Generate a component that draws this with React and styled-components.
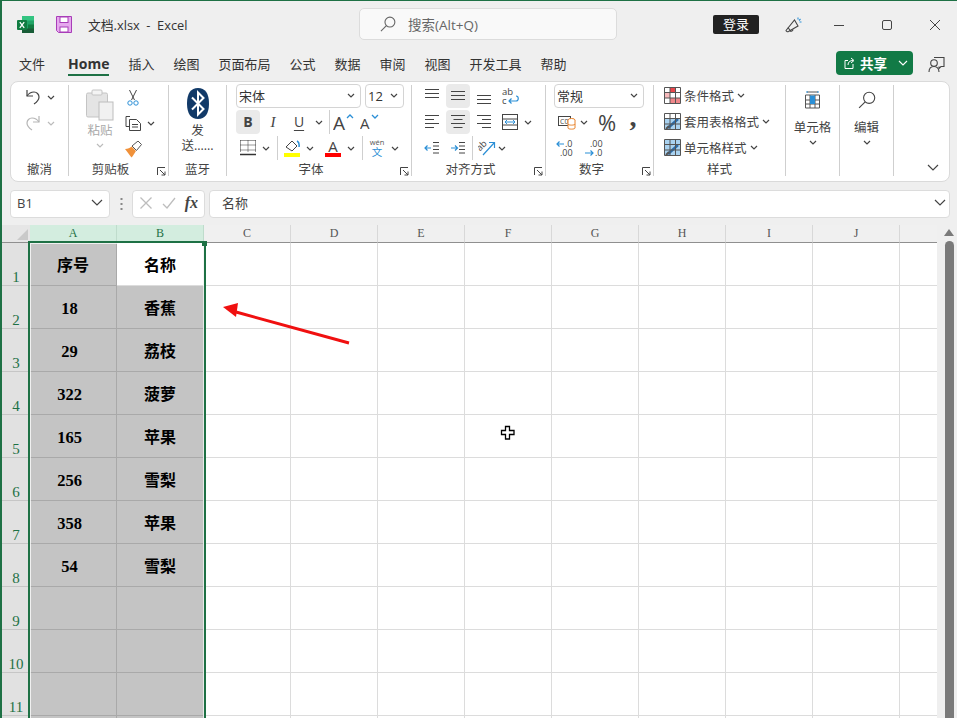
import React from "react";
import styled, { createGlobalStyle } from "styled-components";

const UI_FONT = `"Open Sans", "Noto Sans CJK SC", sans-serif`;
const GREEN = "#1e7145";
const INK = "#444";
const BLUE = "#2b8fd6";

const COLUMNS = ["A", "B", "C", "D", "E", "F", "G", "H", "I", "J", "K"];
const TABLE = [
  ["序号", "名称"],
  ["18", "香蕉"],
  ["29", "荔枝"],
  ["322", "菠萝"],
  ["165", "苹果"],
  ["256", "雪梨"],
  ["358", "苹果"],
  ["54", "雪梨"],
  ["", ""],
  ["", ""],
  ["", ""],
  ["", ""],
];
const TABS = ["文件", "Home", "插入", "绘图", "页面布局", "公式", "数据", "审阅", "视图", "开发工具", "帮助"];

const Global = createGlobalStyle`
  html, body { margin: 0; padding: 0; background: #efefef; }
  #root { width: 957px; height: 718px; overflow: hidden; }
  * { box-sizing: border-box; }
`;

const Frame = styled.div`
  width: 957px;
  height: 718px;
  overflow: hidden;
  background: #efefef;
  border-top: 1px solid ${GREEN};
  border-left: 2px solid ${GREEN};
  font-family: ${UI_FONT};
  color: #333;
  display: flex;
  flex-direction: column;
`;

const TitleBar = styled.div`
  height: 47px;
  flex: none;
  display: flex;
  align-items: center;
  & > * {
    flex: none;
  }
`;

const TitleLeft = styled.div`
  width: 357px;
  padding-left: 15px;
  display: flex;
  align-items: center;
`;

const SaveSlot = styled.span`
  display: flex;
  margin: 0 16px 0 22px;
`;

const DocName = styled.span`
  font-size: 12.8px;
  white-space: pre;
  color: #333;
`;

const SearchBox = styled.div`
  width: 258px;
  height: 32px;
  margin-top: -1px;
  padding-left: 20px;
  background: #f9f9f9;
  border: 1px solid #dcdcdc;
  border-radius: 5px;
  display: flex;
  align-items: center;
  gap: 12px;
  font-size: 13.5px;
  color: #666;
`;

const LoginButton = styled.button`
  width: 46px;
  height: 19px;
  margin: -1px 26px 0 96px;
  padding: 0;
  border: 0;
  border-radius: 2px;
  background: #222;
  color: #fff;
  font: 13px/19px ${UI_FONT};
`;

const WinButton = styled.span`
  width: 48px;
  flex: none;
  display: flex;
  justify-content: center;
  margin-left: ${(p) => p.$ml || 0}px;
`;

const TabBar = styled.div`
  height: 33px;
  flex: none;
  padding-left: 17px;
  display: flex;
  align-items: flex-start;
`;

const Tab = styled.span`
  height: 28px;
  margin-left: ${(p) => (p.$active ? 4 : 0)}px;
  margin-right: 19px;
  padding-top: 7px;
  font-size: ${(p) => (p.$active ? "14px" : "13px")};
  line-height: 18px;
  font-weight: ${(p) => (p.$active ? 700 : 400)};
  border-bottom: 2px solid ${(p) => (p.$active ? GREEN : "transparent")};
  color: #333;
`;

const ShareButton = styled.div`
  width: 77px;
  height: 24px;
  flex: none;
  margin: 3px 0 0 auto;
  padding-left: 8px;
  border-radius: 4px;
  background: #127a46;
  color: #fff;
  font-size: 13.5px;
  font-weight: 700;
  display: flex;
  align-items: center;
  gap: 4px;
`;

const ShareChevron = styled.span`
  display: flex;
  margin-left: 7px;
`;

const CommentSlot = styled.span`
  display: flex;
  margin: 8px 12px 0 15px;
`;

const Ribbon = styled.div`
  height: 101px;
  flex: none;
  margin: 0 7px 0 8px;
  padding: 3px 0 5px;
  background: #fff;
  border: 1px solid #dadada;
  border-radius: 8px;
  display: flex;
`;

const Group = styled.section`
  position: relative;
  flex: ${(p) => (p.$w ? `0 0 ${p.$w}px` : "1")};
  padding-left: ${(p) => p.$pad || 0}px;
  border-right: ${(p) => (p.$w ? "1px solid #cfcfcf" : "0")};
  display: flex;
  flex-direction: column;
`;

const GroupBody = styled.div`
  flex: 1;
  margin-top: -1px;
  min-height: 0;
`;

const GroupLabel = styled.div`
  margin-left: ${(p) => -(p.$pad || 0)}px;
  padding-right: ${(p) => (p.$launch ? 16 : 0)}px;
  font-size: 12.5px;
  line-height: 13px;
  text-align: center;
  color: #444;
`;

const Launcher = styled.span`
  position: absolute;
  right: 2px;
  bottom: 0;
  display: flex;
`;

const Row = styled.div`
  height: ${(p) => p.$h || 24}px;
  margin-bottom: ${(p) => (p.$h ? 0 : 2)}px;
  display: flex;
  align-items: center;
`;

const Btn = styled.span`
  width: ${(p) => p.$w || 24}px;
  height: 24px;
  flex: none;
  margin-left: ${(p) => p.$ml || 0}px;
  border-radius: 4px;
  background: ${(p) => (p.$active ? "#eaeaea" : "transparent")};
  color: ${INK};
  display: flex;
  align-items: center;
  justify-content: center;
`;

const ChevLine = styled.span`
  height: 14px;
  display: flex;
  align-items: center;
`;

const Letter = styled.span`
  font-family: ${(p) => (p.$serif ? `"Liberation Serif", serif` : `"Open Sans", sans-serif`)};
  font-size: ${(p) => p.$size || 14}px;
  font-weight: ${(p) => (p.$bold ? 700 : 400)};
  font-style: ${(p) => (p.$italic ? "italic" : "normal")};
  text-decoration: ${(p) => (p.$under ? "underline" : "none")};
  text-underline-offset: 3px;
  line-height: 1;
  margin-bottom: ${(p) => p.$lift || 0}px;
  color: ${INK};
`;

const Sep = styled.span`
  width: 1px;
  height: 24px;
  flex: none;
  margin: 0 ${(p) => p.$right || 2}px 0 ${(p) => p.$left || 3}px;
  background: #cfcfcf;
`;

const Select = styled.div`
  width: ${(p) => p.$w}px;
  height: 24px;
  flex: none;
  margin-left: ${(p) => p.$ml || 0}px;
  padding: 0 5px 1px 2px;
  border: 1px solid #d4d4d4;
  border-radius: 4px;
  display: flex;
  align-items: center;
  justify-content: space-between;
  font-size: 13px;
  color: #333;
`;

const SplitRow = styled.div`
  display: flex;
`;

const PasteColumn = styled.div`
  width: 40px;
  padding-top: 5px;
  margin-right: 2px;
  display: flex;
  flex-direction: column;
  align-items: center;
`;

const StackText = styled.span`
  font-size: 12.5px;
  line-height: 15px;
  color: ${(p) => (p.$muted ? "#aaa" : "#444")};
  margin-top: ${(p) => p.$mt || 0}px;
  white-space: nowrap;
`;

const StackColumn = styled.div`
  padding-top: ${(p) => p.$top || 5}px;
  display: flex;
  flex-direction: column;
  align-items: center;
`;

const StyleStack = styled.div`
  margin-top: -2px;
`;

const StyleItem = styled.div`
  height: 26px;
  display: flex;
  align-items: center;
  gap: 3px;
  font-size: 12.5px;
  color: #444;
`;

const CollapseSlot = styled.span`
  margin: auto 10px 0 auto;
  padding-bottom: 5px;
  display: flex;
`;

const FormulaRow = styled.div`
  height: 28px;
  flex: none;
  margin: 8px 7px 7px 8px;
  display: flex;
  align-items: stretch;
`;

const FieldBox = styled.div`
  width: ${(p) => (p.$w ? `${p.$w}px` : "auto")};
  flex: ${(p) => (p.$w ? "none" : "1")};
  margin-left: ${(p) => p.$ml || 0}px;
  padding: 0 ${(p) => p.$padR || 6}px 3px ${(p) => p.$padL || 6}px;
  background: #fff;
  border: 1px solid #dcdcdc;
  border-radius: 4px;
  display: flex;
  align-items: center;
  justify-content: space-between;
  font-size: 13px;
  color: #444;
`;

const DotsSlot = styled.span`
  width: 22px;
  flex: none;
  display: flex;
  align-items: center;
  justify-content: center;
`;

const SheetArea = styled.div`
  flex: 1;
  min-height: 0;
  display: flex;
`;

const Sheet = styled.div`
  position: relative;
  width: 935px;
  flex: none;
  overflow: hidden;
  background: #fff;
  display: grid;
  grid-template-columns: 28px repeat(11, 87px);
  grid-auto-rows: 43px;
  grid-template-rows: 18px;
`;

const Corner = styled.div`
  background: #e6e6e6;
  border-bottom: 1px solid #8f8f8f;
  display: flex;
  align-items: flex-end;
  justify-content: flex-end;
  padding: 0 2px 2px 0;
`;

const ColHead = styled.div`
  background: ${(p) => (p.$on ? "#d3eddf" : "#f0f0f0")};
  color: ${(p) => (p.$on ? GREEN : "#555")};
  border-right: 1px solid ${(p) => (p.$on ? "#bfdccc" : "#d8d8d8")};
  border-bottom: 1px solid #8f8f8f;
  font: 12px/17px "Liberation Serif", serif;
  text-align: center;
`;

const RowHead = styled.div`
  background: #e1e1e1;
  border-bottom: 1px solid #c6c6c6;
  color: ${GREEN};
  font: 15px/15px "Liberation Serif", serif;
  display: flex;
  align-items: flex-end;
  justify-content: center;
`;

const Cell = styled.div`
  background: ${(p) => (p.$fill ? "#c4c4c4" : "#fff")};
  border-right: 1px solid ${(p) => (p.$fill ? "#a9a9a9" : "#dcdcdc")};
  border-bottom: 1px solid ${(p) => (p.$fill ? "#a9a9a9" : "#dcdcdc")};
  padding: ${(p) => (p.$num ? 3 : 0)}px ${(p) => (p.$num ? 7 : 0)}px 0 0;
  font-family: "Liberation Serif", "Noto Sans CJK SC", serif;
  font-size: ${(p) => (p.$num ? 16.5 : 16)}px;
  font-weight: 700;
  color: #000;
  display: flex;
  align-items: center;
  justify-content: center;
`;

const Selection = styled.div`
  position: absolute;
  left: 26px;
  top: 16px;
  width: 178px;
  height: 600px;
  border: 2px solid ${GREEN};
  box-shadow: inset 0 0 0 1px rgba(255, 255, 255, 0.75);
  pointer-events: none;
`;

const Handle = styled.span`
  position: absolute;
  right: -3px;
  top: -2px;
  width: 5px;
  height: 5px;
  background: ${GREEN};
`;

const Overlay = styled.svg`
  position: absolute;
  left: ${(p) => p.$x}px;
  top: ${(p) => p.$y}px;
  pointer-events: none;
`;

const ScrollBar = styled.div`
  flex: 1;
  padding: 4px 4px 0 7px;
  display: flex;
  flex-direction: column;
  align-items: center;
`;

const ScrollThumb = styled.div`
  width: 9px;
  flex: 1;
  margin-top: 5px;
  background: #7a7a7a;
  border-radius: 5px 5px 0 0;
`;

const Glyph = ({ w = 16, h = 16, children, stroke = INK, sw = 1 }) => (
  <svg width={w} height={h} viewBox={`0 0 ${w} ${h}`} fill="none" stroke={stroke} strokeWidth={sw} style={{ display: "block" }}>
    {children}
  </svg>
);

const Chevron = ({ color = INK, muted }) => (
  <Glyph w={8} h={5} stroke={muted ? "#bbb" : color} sw={1.2}>
    <path d="M1 1l3 3 3-3" />
  </Glyph>
);

const Chev = ({ ml, muted }) => (
  <Btn $w={14} $ml={ml}>
    <Chevron muted={muted} />
  </Btn>
);

const LauncherIcon = () => (
  <Launcher>
    <Glyph w={9} h={9} sw={1}>
      <path d="M.5 8V.5H8M3 3l5 5M8 4.5V8H4.5" />
    </Glyph>
  </Launcher>
);

const ExcelLogo = () => (
  <svg width={17} height={17} viewBox="0 0 17 17" style={{ display: "block" }}>
    <rect x="5" y="0" width="12" height="17" rx="1.5" fill="#21a366" />
    <rect x="5" y="0" width="12" height="4.5" fill="#33c481" />
    <rect x="11" y="8.5" width="6" height="4.5" fill="#107c41" />
    <rect x="5" y="12.5" width="12" height="4.5" fill="#185c37" />
    <rect x="0" y="4" width="10" height="10" rx="1" fill="#107c41" />
    <path d="M2.8 6.2l4.4 5.6M7.2 6.2l-4.4 5.6" stroke="#fff" strokeWidth="1.3" />
  </svg>
);

const SaveIcon = () => (
  <svg width={16} height={17} viewBox="0 0 16 17" style={{ display: "block" }}>
    <path d="M.5.5h15v16H2.5l-2-2z" fill="#e6a8ee" stroke="#a83db8" />
    <rect x="4" y="1" width="8" height="5.5" fill="#fff" stroke="#a83db8" />
    <rect x="4" y="11" width="8" height="5" fill="#fff" stroke="#a83db8" />
  </svg>
);

const SearchIcon = ({ size = 16, color = "#666" }) => (
  <Glyph w={size} h={size} stroke={color} sw={1.1}>
    <circle cx={size * 0.62} cy={size * 0.38} r={size * 0.31} />
    <path d={`M${size * 0.4} ${size * 0.6}L${size * 0.06} ${size * 0.94}`} />
  </Glyph>
);

const Megaphone = () => (
  <Glyph w={17} h={17} sw={1.1}>
    <path d="M1 14.5L9.5 4l3.5 6-9.5 5.5c-1 .5-2.5-.2-2.5-1z" />
    <path d="M3 11.5l2.5 3.5" />
    <path d="M5 15a2 2 0 0 0 3-1.5" />
    <path d="M13 1.5v2M15.5 3l-1.5 1.5M16.5 6h-2" stroke={BLUE} />
  </Glyph>
);

const ShareIcon = () => (
  <Glyph w={12} h={12} stroke="#fff">
    <path d="M9 7v4.5H1v-8h3" />
    <path d="M4 8c0-3 2-4.5 5-4.5M7 1l3 2.5L7 6" />
  </Glyph>
);

const CommentIcon = () => (
  <Glyph w={17} h={17} sw={1.1}>
    <path d="M6 1.500h10v9h-3l-2 2v-2" />
    <circle cx="6" cy="7" r="3.300" fill="#efefef" />
    <path d="M1 16c0-3.500 2.200-5.500 5-5.500s5 2 5 5.500" />
  </Glyph>
);

const Undo = ({ color = INK, flip }) => (
  <Glyph w={18} h={18} stroke={color} sw={1.2}>
    <g transform={flip ? "matrix(-1 0 0 1 18 0)" : undefined}>
      <path d="M3 2v6h6" />
      <path d="M3 8c2-3 4-4 7-4a5 5 0 0 1 5 5c0 3-2 5-5 7" />
    </g>
  </Glyph>
);

const PasteIcon = () => (
  <svg width={28} height={32} viewBox="0 0 28 32" style={{ display: "block" }}>
    <rect x=".5" y="4" width="21" height="24" rx="1.5" fill="#e4e4e4" stroke="#c4c4c4" />
    <rect x="6" y="1" width="10" height="5" rx="1" fill="#f4f4f4" stroke="#c4c4c4" />
    <rect x="13" y="13" width="14" height="18" fill="#f1f1f1" stroke="#bdbdbd" />
  </svg>
);

const Scissors = () => (
  <Glyph w={12} h={17} sw={1}>
    <path d="M2.500 1l5 10M9.500 1l-5 10" />
    <circle cx="3" cy="14" r="2.200" stroke={BLUE} />
    <circle cx="9" cy="14" r="2.200" stroke={BLUE} />
  </Glyph>
);

const CopyIcon = () => (
  <Glyph w={17} h={16}>
    <path d="M5 1.500H1v10h3" />
    <path d="M4.500 4.500h7l4 4v7h-11z" fill="#fff" />
    <path d="M7 9.500h6M7 12h6" />
  </Glyph>
);

const BrushIcon = () => (
  <svg width={17} height={17} viewBox="0 0 17 17" style={{ display: "block" }}>
    <path d="M0 8c3 0 5-1 6.500-2.500L11 10c-1.500 2-3 5-4.500 6.500C4.500 14 2 10.500 0 8z" fill="#f0913a" />
    <path d="M7 5l6-5 3.500 3.500-5 6z" fill="#fff" stroke="#555" />
  </svg>
);

const BluetoothIcon = () => (
  <svg width={22} height={31} viewBox="0 0 22 31" style={{ display: "block" }}>
    <path d="M11 0c7 0 11 5 11 15.500S18 31 11 31 0 26 0 15.500 4 0 11 0z" fill="#123a68" />
    <path d="M5 9.500l11.500 11.500L11 26.500V4.500l5.500 5.500L5 21.500" fill="none" stroke="#fff" strokeWidth="2" />
  </svg>
);

const BorderIcon = () => (
  <Glyph w={16} h={16} stroke="#333">
    <path d="M.5 .5h15M.5 5h15M.5 10h15M.5 .5v11M8 .5v11M15.500 .5v11" strokeDasharray="1 1" />
    <path d="M0 14.500h16" strokeWidth={1.5} />
  </Glyph>
);

const FillIcon = () => (
  <svg width={16} height={18} viewBox="0 0 16 18" style={{ display: "block" }}>
    <path d="M2 8l6-6 5 5-5 5z" fill="#fff" stroke="#444" />
    <path d="M13 2c2 1 2.500 3 2 6" fill="none" stroke={BLUE} strokeWidth="1.500" />
    <rect x="0" y="14" width="16" height="4" fill="#ffff00" />
  </svg>
);

const TextColorIcon = () => (
  <svg width={16} height={18} viewBox="0 0 16 18" style={{ display: "block" }}>
    <text x="8" y="12.500" textAnchor="middle" fontSize="15" fontFamily="Open Sans" fill="#444">A</text>
    <rect x="0" y="14" width="16" height="4" fill="#ff0000" />
  </svg>
);

const GrowFont = ({ up }) => (
  <svg width={22} height={20} viewBox="0 0 22 20" style={{ display: "block" }}>
    <text x="0" y={up ? 18 : 17} fontSize={up ? 19 : 15} fontFamily="Open Sans" fill="#444">A</text>
    <path d={up ? "M14 6l3-3 3 3" : "M12 3l3 3 3-3"} fill="none" stroke={BLUE} strokeWidth="1.300" />
  </svg>
);

const WenIcon = () => (
  <svg width={16} height={20} viewBox="0 0 16 20" style={{ display: "block" }}>
    <text x="8" y="7" textAnchor="middle" fontSize="7.500" fontFamily="Open Sans" fill="#555">wén</text>
    <text x="8" y="18" textAnchor="middle" fontSize="10.500" fontFamily="Noto Sans CJK SC" fill={BLUE}>文</text>
  </svg>
);

const Lines = ({ widths, top = 3, gap = 4, align = "left", stroke = INK }) => (
  <Glyph w={16} h={16} stroke={stroke}>
    {widths.map((w, i) => {
      const x = align === "left" ? 1 : align === "center" ? 8 - w / 2 : 15 - w;
      const y = top + i * gap + 0.5;
      return <path key={i} d={`M${x} ${y}h${w}`} />;
    })}
  </Glyph>
);

const WrapIcon = () => (
  <svg width={18} height={18} viewBox="0 0 18 18" style={{ display: "block" }}>
    <text x="1" y="8" fontSize="9.500" fontFamily="Open Sans" fill="#444">ab</text>
    <text x="1" y="17" fontSize="9.500" fontFamily="Open Sans" fill="#444">c</text>
    <path d="M15 9c3 0 3 5 0 5H8M10.500 11.500L8 14l2.500 2.500" fill="none" stroke={BLUE} strokeWidth="1.200" />
  </svg>
);

const MergeIcon = () => (
  <Glyph w={16} h={16}>
    <rect x=".5" y=".5" width="15" height="15" />
    <path d="M.5 5h15M.5 11h15" />
    <path d="M3 8h10M5 6l-2 2 2 2M11 6l2 2-2 2" stroke={BLUE} />
  </Glyph>
);

const IndentIcon = ({ more }) => (
  <Glyph w={16} h={14}>
    <path d="M9 1.500h6M9 5h6M9 8.500h6M9 12h6" />
    <path d={more ? "M1 7h6M5 4.500L7.500 7 5 9.500" : "M7 7H1M3.500 4.500L1 7l2.500 2.500"} stroke={BLUE} strokeWidth={1.2} />
  </Glyph>
);

const OrientIcon = () => (
  <svg width={18} height={18} viewBox="0 0 18 18" style={{ display: "block" }}>
    <text x="0" y="10" fontSize="9" fontFamily="Open Sans" fill="#444" transform="rotate(-45 4 9)">ab</text>
    <path d="M5 16L16 4M11 3.500h5.500V9" fill="none" stroke={BLUE} strokeWidth="1.200" />
  </svg>
);

const AccountingIcon = () => (
  <svg width={18} height={16} viewBox="0 0 18 16" style={{ display: "block" }}>
    <rect x=".5" y="2.500" width="12" height="9" fill="none" stroke="#444" />
    <text x="2" y="10" fontSize="7" fontFamily="Open Sans" fill="#444">C0</text>
    <ellipse cx="13.500" cy="6" rx="3.500" ry="1.500" fill="#fff" stroke="#e8822a" />
    <path d="M10 6v8c0 1.500 7 1.500 7 0V6M10 10c0 1.500 7 1.500 7 0" fill="#fff" stroke="#e8822a" />
  </svg>
);

const DecimalIcon = ({ more }) => (
  <svg width={22} height={18} viewBox="0 0 22 18" style={{ display: "block" }}>
    <text x={more ? 9 : 7} y="8" fontSize="9" fontFamily="Open Sans" fill="#444">{more ? ".0" : ".00"}</text>
    <text x={more ? 4 : 12} y="17" fontSize="9" fontFamily="Open Sans" fill="#444">{more ? ".00" : ".0"}</text>
    <path d={more ? "M8 5H1M3.500 2.500L1 5l2.500 2.500" : "M2 14h8M7.500 11.500L10 14l-2.500 2.500"} fill="none" stroke={BLUE} strokeWidth="1.200" />
  </svg>
);

const TableBase = ({ children }) => (
  <svg width={17} height={17} viewBox="0 0 17 17" style={{ display: "block" }}>
    {children}
    <path d="M.5 .5h16v16H.5zM.5 5.500h16M.5 11h16M6 .5v16M11.500 .5v16" fill="none" stroke="#555" />
  </svg>
);

const CondIcon = () => (
  <TableBase>
    <rect x="6" y="1" width="5.500" height="4.500" fill="#e8474c" />
    <rect x="6" y="11" width="10" height="5" fill="#f0878a" />
    <rect x="1" y="5.500" width="5" height="5.500" fill="#f6b9bb" />
  </TableBase>
);

const Brushed = ({ solid }) => (
  <TableBase>
    <rect x="1" y={solid ? 1 : 6} width="15" height={solid ? 15 : 10} fill="#a9d2f0" />
    <path d="M4 15L14 6" stroke="#2d6ca8" strokeWidth="2.500" />
    <path d="M2 16l3-3" stroke="#555" strokeWidth="2" />
  </TableBase>
);

const CellsIcon = () => (
  <svg width={17} height={18} viewBox="0 0 17 18" style={{ display: "block" }}>
    <path d="M3 1h11M1.500 4h14v13h-14zM1.500 9h14M1.500 13h14M6 4v13M11 4v13" fill="none" stroke="#555" />
    <rect x="6" y="4.500" width="5" height="8.500" fill={BLUE} />
    <path d="M3 0v2M14 0v2" stroke={BLUE} />
  </svg>
);

const Dots = () => (
  <Glyph w={3} h={14} stroke="#888" sw={2}>
    <path d="M1.500 1v2M1.500 6v2M1.500 11v2" strokeDasharray="2 3" />
  </Glyph>
);

const App = () => (
  <>
    <Global />
    <Frame>
      <TitleBar>
        <TitleLeft>
          <ExcelLogo />
          <SaveSlot>
            <SaveIcon />
          </SaveSlot>
          <DocName>{"文档.xlsx  -  Excel"}</DocName>
        </TitleLeft>
        <SearchBox>
          <SearchIcon />
          <span>搜索(Alt+Q)</span>
        </SearchBox>
        <LoginButton>登录</LoginButton>
        <Megaphone />
        <WinButton $ml={13}>
          <Glyph w={12} h={12}>
            <path d="M1 6.500h10" />
          </Glyph>
        </WinButton>
        <WinButton>
          <Glyph w={12} h={12}>
            <rect x="1.500" y="1.500" width="9" height="9" rx="1.500" />
          </Glyph>
        </WinButton>
        <WinButton>
          <Glyph w={12} h={12}>
            <path d="M1 1l10 10M11 1L1 11" />
          </Glyph>
        </WinButton>
      </TitleBar>

      <TabBar>
        {TABS.map((t) => (
          <Tab key={t} $active={t === "Home"}>
            {t}
          </Tab>
        ))}
        <ShareButton>
          <ShareIcon />
          <span>共享</span>
          <ShareChevron>
            <Glyph w={10} h={6} stroke="#fff" sw={1.1}>
              <path d="M1 1l4 4 4-4" />
            </Glyph>
          </ShareChevron>
        </ShareButton>
        <CommentSlot>
          <CommentIcon />
        </CommentSlot>
      </TabBar>

      <Ribbon>
        <Group $w={58} $pad={11}>
          <GroupBody>
            <Row $h={26}>
              <Btn $w={22}>
                <Undo />
              </Btn>
              <Chev />
            </Row>
            <Row $h={26}>
              <Btn $w={22}>
                <Undo color="#b5b5b5" flip />
              </Btn>
              <Chev muted />
            </Row>
          </GroupBody>
          <GroupLabel $pad={11}>撤消</GroupLabel>
        </Group>

        <Group $w={100} $pad={11}>
          <GroupBody>
            <SplitRow>
              <PasteColumn>
                <PasteIcon />
                <StackText $muted $mt={2}>粘贴</StackText>
                <ChevLine>
                  <Chevron muted />
                </ChevLine>
              </PasteColumn>
              <div>
                <Row $h={26}>
                  <Btn $w={22}>
                    <Scissors />
                  </Btn>
                </Row>
                <Row $h={26}>
                  <Btn $w={22}>
                    <CopyIcon />
                  </Btn>
                  <Chev />
                </Row>
                <Row $h={26}>
                  <Btn $w={22}>
                    <BrushIcon />
                  </Btn>
                </Row>
              </div>
            </SplitRow>
          </GroupBody>
          <GroupLabel $pad={11} $launch>剪贴板</GroupLabel>
          <LauncherIcon />
        </Group>

        <Group $w={58}>
          <GroupBody>
            <StackColumn $top={4}>
              <BluetoothIcon />
              <StackText $mt={4}>发</StackText>
              <StackText>送......</StackText>
            </StackColumn>
          </GroupBody>
          <GroupLabel>蓝牙</GroupLabel>
        </Group>

        <Group $w={185} $pad={9}>
          <GroupBody>
            <Row>
              <Select $w={125}>
                <span>宋体</span>
                <Chevron />
              </Select>
              <Select $w={39} $ml={4}>
                <span>12</span>
                <Chevron />
              </Select>
            </Row>
            <Row>
              <Btn $active>
                <Letter $bold>B</Letter>
              </Btn>
              <Btn $w={26}>
                <Letter $serif $italic $size={15}>I</Letter>
              </Btn>
              <Btn $w={26}>
                <Letter $under>U</Letter>
              </Btn>
              <Chev />
              <Sep />
              <Btn>
                <GrowFont up />
              </Btn>
              <Btn $ml={3}>
                <GrowFont />
              </Btn>
            </Row>
            <Row>
              <Btn>
                <BorderIcon />
              </Btn>
              <Chev ml={-1} />
              <Sep $left={4} />
              <Btn>
                <FillIcon />
              </Btn>
              <Chev ml={-1} />
              <Btn $ml={4}>
                <TextColorIcon />
              </Btn>
              <Chev ml={-1} />
              <Sep $left={4} />
              <Btn>
                <WenIcon />
              </Btn>
              <Chev ml={-1} />
            </Row>
          </GroupBody>
          <GroupLabel $pad={9} $launch>字体</GroupLabel>
          <LauncherIcon />
        </Group>

        <Group $w={134} $pad={8}>
          <GroupBody>
            <Row>
              <Btn>
                <Lines widths={[14, 14, 14]} top={1} />
              </Btn>
              <Btn $ml={2} $active>
                <Lines widths={[14, 14, 14]} top={3} />
              </Btn>
              <Btn $ml={2}>
                <Lines widths={[14, 14, 14]} top={7} />
              </Btn>
              <Btn $ml={2}>
                <WrapIcon />
              </Btn>
            </Row>
            <Row>
              <Btn>
                <Lines widths={[14, 9, 14, 9]} top={1} />
              </Btn>
              <Btn $ml={2} $active>
                <Lines widths={[14, 9, 14, 9]} top={1} align="center" />
              </Btn>
              <Btn $ml={2}>
                <Lines widths={[14, 9, 14, 9]} top={1} align="right" />
              </Btn>
              <Btn $ml={2}>
                <MergeIcon />
              </Btn>
              <Chev ml={-1} />
            </Row>
            <Row>
              <Btn>
                <IndentIcon />
              </Btn>
              <Btn $ml={2}>
                <IndentIcon more />
              </Btn>
              <Sep $left={2} />
              <Btn>
                <OrientIcon />
              </Btn>
              <Chev ml={-4} />
            </Row>
          </GroupBody>
          <GroupLabel $pad={8} $launch>对齐方式</GroupLabel>
          <LauncherIcon />
        </Group>

        <Group $w={108} $pad={8}>
          <GroupBody>
            <Row>
              <Select $w={90}>
                <span>常规</span>
                <Chevron />
              </Select>
            </Row>
            <Row>
              <Btn $ml={1}>
                <AccountingIcon />
              </Btn>
              <Chev ml={-2} />
              <Btn $w={28} $ml={2}>
                <Letter $size={22}>%</Letter>
              </Btn>
              <Btn>
                <Letter $serif $bold $size={28} $lift={10}>,</Letter>
              </Btn>
            </Row>
            <Row>
              <Btn $w={26}>
                <DecimalIcon more />
              </Btn>
              <Btn $w={26} $ml={1}>
                <DecimalIcon />
              </Btn>
            </Row>
          </GroupBody>
          <GroupLabel $pad={8} $launch>数字</GroupLabel>
          <LauncherIcon />
        </Group>

        <Group $w={132} $pad={10}>
          <GroupBody>
            <StyleStack>
              <StyleItem>
                <CondIcon />
                <span>条件格式</span>
                <Chevron />
              </StyleItem>
              <StyleItem>
                <Brushed />
                <span>套用表格格式</span>
                <Chevron />
              </StyleItem>
              <StyleItem>
                <Brushed solid />
                <span>单元格样式</span>
                <Chevron />
              </StyleItem>
            </StyleStack>
          </GroupBody>
          <GroupLabel $pad={10}>样式</GroupLabel>
        </Group>

        <Group $w={54}>
          <GroupBody>
            <StackColumn $top={7}>
              <CellsIcon />
              <StackText $mt={11}>单元格</StackText>
              <ChevLine>
                <Chevron />
              </ChevLine>
            </StackColumn>
          </GroupBody>
        </Group>

        <Group $w={54}>
          <GroupBody>
            <StackColumn $top={7}>
              <SearchIcon size={18} color={INK} />
              <StackText $mt={11}>编辑</StackText>
              <ChevLine>
                <Chevron />
              </ChevLine>
            </StackColumn>
          </GroupBody>
        </Group>

        <Group>
          <CollapseSlot>
            <Glyph w={12} h={7} sw={1.2}>
              <path d="M1 1l5 5 5-5" />
            </Glyph>
          </CollapseSlot>
        </Group>
      </Ribbon>

      <FormulaRow>
        <FieldBox $w={100}>
          <span>B1</span>
          <Glyph w={12} h={7} sw={1.2}>
            <path d="M1 1l5 5 5-5" />
          </Glyph>
        </FieldBox>
        <DotsSlot>
          <Dots />
        </DotsSlot>
        <FieldBox $w={73}>
          <Glyph w={14} h={14} stroke="#bdbdbd" sw={1.3}>
            <path d="M1.500 1.500l11 11M12.500 1.500l-11 11" />
          </Glyph>
          <Glyph w={14} h={14} stroke="#bdbdbd" sw={1.3}>
            <path d="M1 8l4 4 8-10" />
          </Glyph>
          <Letter $serif $italic $bold $size={16}>fx</Letter>
        </FieldBox>
        <FieldBox $padL={12} $padR={3} $ml={4}>
          <span>名称</span>
          <Glyph w={12} h={7} sw={1.2}>
            <path d="M1 1l5 5 5-5" />
          </Glyph>
        </FieldBox>
      </FormulaRow>

      <SheetArea>
        <Sheet>
          <Corner>
            <Glyph w={11} h={11} stroke="none">
              <path d="M11 0v11H0z" fill="#c9c9c9" />
            </Glyph>
          </Corner>
          {COLUMNS.map((c, i) => (
            <ColHead key={c} $on={i < 2}>
              {c}
            </ColHead>
          ))}
          {TABLE.map((row, r) => (
            <React.Fragment key={r}>
              <RowHead>{r + 1}</RowHead>
              {COLUMNS.map((c, i) => {
                const value = row[i] || "";
                const filled = i < 2 && !(r === 0 && i === 1);
                return (
                  <Cell key={c} $fill={filled} $num={/^\d+$/.test(value)}>
                    {value}
                  </Cell>
                );
              })}
            </React.Fragment>
          ))}
          <Selection>
            <Handle />
          </Selection>
          <Overlay $x={218} $y={74} width={135} height={50} viewBox="0 0 135 50">
            <path d="M129 44L16 13" stroke="#f01010" strokeWidth="3" />
            <path d="M3 8l15-4-2 14z" fill="#f01010" />
          </Overlay>
          <Overlay $x={498} $y={200} width={16} height={16} viewBox="0 0 16 16">
            <path d="M5.500 1.500h4v4h4.500v4H9.500v4.500h-4V9.500H1.500v-4h4z" fill="#fff" stroke="#000" strokeWidth="1.300" />
          </Overlay>
        </Sheet>
        <ScrollBar>
          <Glyph w={10} h={7} stroke="none">
            <path d="M5 0l5 7H0z" fill="#7a7a7a" />
          </Glyph>
          <ScrollThumb />
        </ScrollBar>
      </SheetArea>
    </Frame>
  </>
);

export default App;
